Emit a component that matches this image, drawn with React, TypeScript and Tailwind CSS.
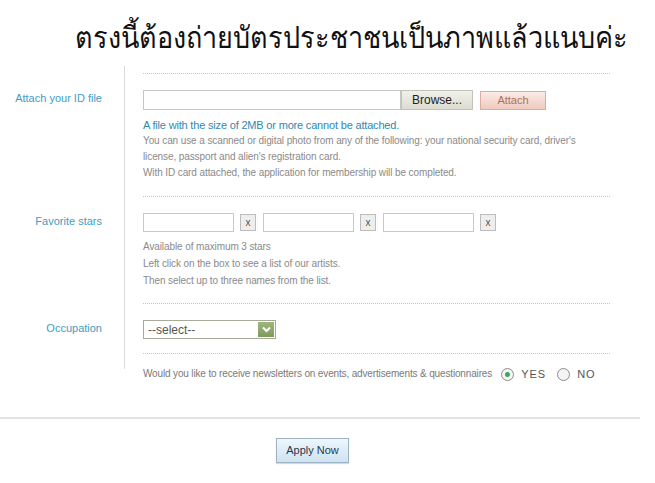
import React from "react";

const sans = { fontFamily: '"Liberation Sans", Arial, sans-serif' };

const Label = ({ children }: { children: React.ReactNode }) => (
  <span className="text-[11px] text-[#3f9cc3]">{children}</span>
);

const StarBox = () => (
  <div className="flex items-center gap-[6px]">
    <div className="w-[91px] h-[19px] border border-[#c9c9c9] bg-white" />
    <button className="w-[16px] h-[17px] border border-[#bdbdbd] bg-[#eeeeee] text-[10px] leading-none text-[#555]">
      x
    </button>
  </div>
);

const Radio = ({ on }: { on?: boolean }) => (
  <span className="w-[13px] h-[13px] rounded-full border border-[#8c8c8c] bg-[#f4f4f4] flex items-center justify-center">
    {on && <span className="w-[5px] h-[5px] rounded-full bg-[#3aa65a]" />}
  </span>
);

export default function App() {
  return (
    <div className="w-[655px] h-[483px] bg-white overflow-hidden" style={sans}>
      <div className="h-[66px] pl-[75px] pt-[20px]">
        <h1
          className="text-[27px] leading-[40px] text-[#111] font-light whitespace-nowrap origin-bottom-left scale-y-110"
          style={{ fontFamily: '"Liberation Serif", serif' }}
        >
          ตรงนี้ต้องถ่ายบัตรประชาชนเป็นภาพแล้วแนบค่ะ
        </h1>
      </div>

      <div className="grid grid-cols-[125px_1fr]">
        {/* attach */}
        <div className="border-r border-[#dcdcdc] text-right pr-[22px] pt-[19px]">
          <Label>Attach your ID file</Label>
        </div>
        <div className="pl-[18px] pr-[45px] pt-[7px]">
          <div className="border-t border-dotted border-[#c4c4c4] pt-[16px] pb-[15px]">
            <div className="flex items-center">
              <div className="w-[258px] h-[20px] border border-[#c6c6c6] bg-white" />
              <button className="w-[72px] h-[20px] border border-[#c2c2b8] bg-gradient-to-b from-[#f1f1ea] to-[#dcdcd2] text-[12px] text-[#222]">
                Browse...
              </button>
              <button className="ml-[7px] w-[66px] h-[19px] border border-[#d9ada0] bg-gradient-to-b from-[#fbebe6] to-[#efc9be] text-[11px] text-[#a8705f]">
                Attach
              </button>
            </div>
            <p className="mt-[7px] text-[11px] leading-[16px] tracking-[-0.18px] text-[#2f89ad]">
              A file with the size of 2MB or more cannot be attached.
            </p>
            <p className="text-[10px] leading-[16px] tracking-[-0.1px] text-[#8a8a8a]">
              You can use a scanned or digital photo from any of the following: your national security card, driver's
              <br />
              license, passport and alien's registration card.
              <br />
              With ID card attached, the application for membership will be completed.
            </p>
          </div>
        </div>

        {/* stars */}
        <div className="border-r border-[#dcdcdc] text-right pr-[22px] pt-[12px]">
          <Label>Favorite stars</Label>
        </div>
        <div className="pl-[18px] pr-[45px]">
          <div className="border-t border-dotted border-[#c4c4c4] pt-[16px] pb-[14px]">
            <div className="flex items-center gap-[7px]">
              <StarBox />
              <StarBox />
              <StarBox />
            </div>
            <p className="mt-[6px] text-[10px] leading-[17px] tracking-[-0.1px] text-[#8a8a8a]">
              Available of maximum 3 stars
              <br />
              Left click on the box to see a list of our artists.
              <br />
              Then select up to three names from the list.
            </p>
          </div>
        </div>

        {/* occupation */}
        <div className="border-r border-[#dcdcdc] text-right pr-[22px] pt-[12px]">
          <Label>Occupation</Label>
        </div>
        <div className="pl-[18px] pr-[45px]">
          <div className="border-t border-dotted border-[#c4c4c4] pt-[16px] pb-[14px]">
            <div className="w-[133px] h-[19px] border border-[#a9a99a] bg-white flex items-center justify-between pl-[4px] pr-[1px]">
              <span className="text-[12px] text-[#555]">--select--</span>
              <span className="w-[16px] h-[15px] bg-gradient-to-b from-[#9fb67f] to-[#7f9a5d] flex items-center justify-center">
                <svg width="9" height="7" viewBox="0 0 9 7">
                  <path d="M1 1.5 L4.5 5 L8 1.5" stroke="#fff" strokeWidth="2" fill="none" />
                </svg>
              </span>
            </div>
          </div>
        </div>

        {/* newsletter */}
        <div>
          <div className="h-[16px] border-r border-[#dcdcdc]" />
        </div>
        <div className="pl-[18px] pr-[45px]">
          <div className="border-t border-dotted border-[#c4c4c4] pt-[12px] flex items-center">
            <span className="text-[10px] leading-[16px] tracking-[-0.15px] text-[#7a7a7a] whitespace-nowrap">
              Would you like to receive newsletters on events, advertisements &amp; questionnaires
            </span>
            <span className="ml-[9px] flex items-center gap-[7px] text-[11px] tracking-[1px] text-[#555]">
              <Radio on />
              YES
              <span className="ml-[4px]">
                <Radio />
              </span>
              NO
            </span>
          </div>
        </div>
      </div>

      <div className="mt-[34px] w-[640px] h-[2px] bg-[#e2e2e2]" />

      <div className="flex justify-center mt-[19px]">
        <button className="ml-[-30px] w-[73px] h-[25px] border border-[#9db3c4] bg-gradient-to-b from-[#eef6fc] to-[#cfe3f2] text-[11px] text-[#1f3a4d] shadow-[0_1px_1px_rgba(0,0,0,0.15)]">
          Apply Now
        </button>
      </div>
    </div>
  );
}
